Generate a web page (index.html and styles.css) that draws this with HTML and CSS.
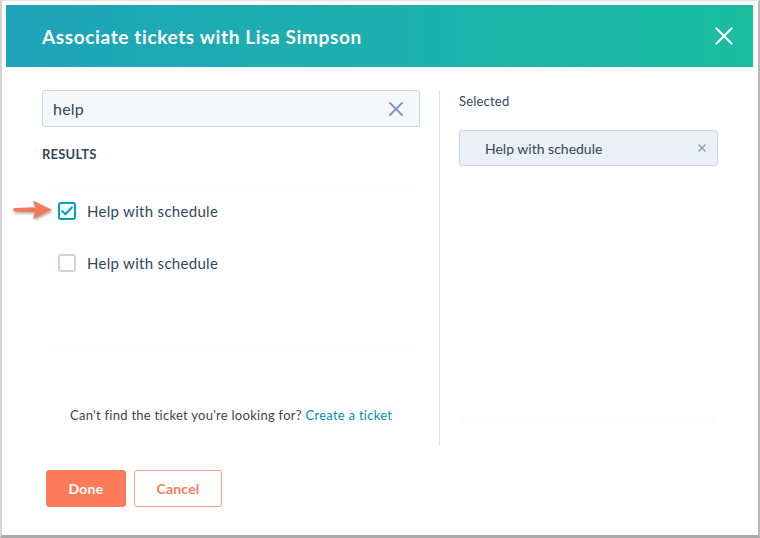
FILE: index.html
```html
<!DOCTYPE html>
<html>
<head>
<meta charset="utf-8">
<link rel="stylesheet" href="styles.css">
</head>
<body>
<div class="frame">
  <div class="header">
    <h1 class="title">Associate tickets with Lisa Simpson</h1>
    <svg class="close" width="18" height="18" viewBox="0 0 18 18"><path d="M1.5 1.5L16.5 16.5M16.5 1.5L1.5 16.5" stroke="#fff" stroke-width="2.2" stroke-linecap="round"/></svg>
  </div>
  <div class="body">
    <div class="left">
      <div class="search">
        <span class="query">help</span>
        <svg class="clear" width="14" height="14" viewBox="0 0 14 14"><path d="M1 1L13 13M13 1L1 13" stroke="#7c98b6" stroke-width="1.8" stroke-linecap="round"/></svg>
      </div>
      <div class="results-label">RESULTS</div>
      <div class="results">
        <div class="row">
          <svg class="arrow" width="42" height="24" viewBox="0 0 42 24"><path d="M1.5 10.6 Q1 10.3 2 10 L23 9.3 L21 2.5 L40 11.8 L21 21 L23 14.3 L2 13.4 Q1 13.2 1.5 12.6 Z" fill="#f5785a"/></svg>
          <span class="check checked"><svg width="12" height="10" viewBox="0 0 12 10"><path d="M1.3 5.2L4.4 8.2L10.8 1.5" stroke="#00a4bd" stroke-width="2.2" fill="none" stroke-linecap="round" stroke-linejoin="round"/></svg></span>
          <span class="label">Help with schedule</span>
        </div>
        <div class="row">
          <span class="check"></span>
          <span class="label">Help with schedule</span>
        </div>
      </div>
      <p class="hint">Can't find the ticket you're looking for? <a class="link">Create a ticket</a></p>
    </div>
    <div class="right">
      <div class="selected-label">Selected</div>
      <div class="chip">
        <span>Help with schedule</span>
        <svg class="chip-x" width="8" height="8" viewBox="0 0 8 8"><path d="M0.5 0.5L7.5 7.5M7.5 0.5L0.5 7.5" stroke="#7c98b6" stroke-width="1.2"/></svg>
      </div>
      <div class="ghost"></div>
    </div>
  </div>
  <div class="footer">
    <button class="btn primary">Done</button>
    <button class="btn secondary">Cancel</button>
  </div>
</div>
</body>
</html>
```

FILE: styles.css
```css
html, body {
  margin: 0;
  padding: 0;
  background: #ffffff;
}
body {
  font-family: Lato, "Open Sans", sans-serif;
  color: #33475b;
}
.frame {
  width: 760px;
  height: 538px;
  box-sizing: border-box;
  border-top: 1px solid #e6e6e6;
  border-left: 2px solid #d4d4d4;
  border-right: 2px solid #b9b9b9;
  border-bottom: 3px solid #aaaaaa;
  padding: 4px 5px 0 4px;
  display: flex;
  flex-direction: column;
}
.header {
  height: 62px;
  flex: none;
  background: linear-gradient(90deg, #1ea4b9 0%, #1cb2ad 55%, #1abda0 100%);
  display: flex;
  align-items: center;
  justify-content: space-between;
  padding: 0 20px 0 36px;
}
.title {
  margin: 0;
  color: #fff;
  font-size: 19px;
  font-weight: 700;
  letter-spacing: 0.62px;
}
.close {
  display: block;
}
.body {
  display: flex;
  height: 356px;
  padding-top: 23px;
  flex: none;
}
.left {
  width: 397px;
  padding-left: 36px;
  border-right: 1px solid #dfe3eb;
  display: flex;
  flex-direction: column;
}
.search {
  width: 378px;
  height: 37px;
  box-sizing: border-box;
  background: #f5f8fa;
  border: 1px solid #cbd6e2;
  border-radius: 3px;
  display: flex;
  align-items: center;
  justify-content: space-between;
  padding: 0 16px 0 10px;
}
.query {
  font-size: 16px;
  color: #33475b;
  letter-spacing: 0.2px;
}
.results-label {
  margin-top: 19px;
  font-size: 13px;
  font-weight: 700;
  color: #33475b;
  letter-spacing: 0.2px;
}
.results {
  margin-top: 26px;
  border-top: 1px solid #fafbfc;
  border-bottom: 1px solid #fafbfc;
  width: 378px;
  height: 158px;
}
.row {
  position: relative;
  display: flex;
  align-items: center;
  height: 52px;
  padding-left: 16px;
}
.row:first-child {
  margin-top: -4px;
}
.arrow {
  position: absolute;
  left: -30px;
  top: 13px;
  filter: drop-shadow(1px 2px 1.2px rgba(0,0,0,0.28));
}
.check {
  width: 18px;
  height: 18px;
  box-sizing: border-box;
  border: 2px solid #cbd6e2;
  border-radius: 3px;
  background: #fff;
  display: flex;
  align-items: center;
  justify-content: center;
  margin-right: 11px;
}
.check.checked {
  border-color: #00a4bd;
}
.label {
  font-size: 15px;
  color: #33475b;
  letter-spacing: 0.3px;
}
.hint {
  margin: auto 0 23px 28px;
  font-size: 13px;
  color: #33475b;
  letter-spacing: 0.27px;
}
.link {
  color: #0091ae;
}
.right {
  padding-left: 19px;
  padding-top: 3px;
  display: flex;
  flex-direction: column;
}
.selected-label {
  font-size: 13px;
  color: #33475b;
  letter-spacing: 0.2px;
}
.chip {
  margin-top: 21px;
  width: 259px;
  height: 36px;
  box-sizing: border-box;
  background: #eaf0f6;
  border: 1px solid #cbd6e2;
  border-radius: 3px;
  display: flex;
  align-items: center;
  justify-content: space-between;
  padding: 0 11px 0 25px;
  font-size: 14px;
  color: #33475b;
}
.ghost {
  margin-top: auto;
  margin-bottom: 21px;
  width: 259px;
  height: 10px;
  background: #fdfdfd;
}
.footer {
  display: flex;
  gap: 8px;
  padding: 24px 0 0 40px;
}
.btn {
  height: 37px;
  box-sizing: border-box;
  border-radius: 3px;
  font-family: Lato, "Open Sans", sans-serif;
  font-size: 14px;
  font-weight: 700;
  padding: 0;
  letter-spacing: 0.2px;
}
.primary {
  width: 80px;
  background: #ff7a59;
  border: 1px solid #ff7a59;
  color: #fff;
}
.secondary {
  width: 88px;
  background: #fff;
  border: 1px solid #ff9f87;
  color: #ff7a59;
}
```
